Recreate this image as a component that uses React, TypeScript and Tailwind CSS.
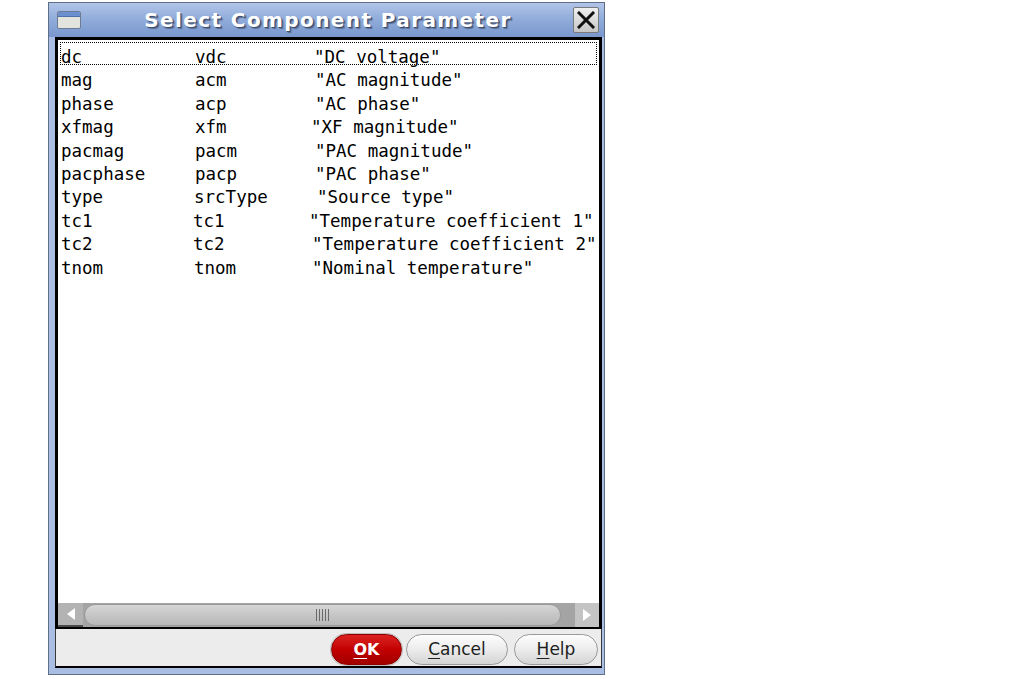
import React from 'react';

type Row = { name: string; field: string; desc: string; w1: string; w2: string };

// column offsets differ a little per row, as in the original tab-aligned list
const rows: Row[] = [
  { name: 'dc', field: 'vdc', desc: '"DC voltage"', w1: 'w-[134px]', w2: 'w-[119px]' },
  { name: 'mag', field: 'acm', desc: '"AC magnitude"', w1: 'w-[134px]', w2: 'w-[120px]' },
  { name: 'phase', field: 'acp', desc: '"AC phase"', w1: 'w-[134px]', w2: 'w-[120px]' },
  { name: 'xfmag', field: 'xfm', desc: '"XF magnitude"', w1: 'w-[134px]', w2: 'w-[116px]' },
  { name: 'pacmag', field: 'pacm', desc: '"PAC magnitude"', w1: 'w-[134px]', w2: 'w-[120px]' },
  { name: 'pacphase', field: 'pacp', desc: '"PAC phase"', w1: 'w-[134px]', w2: 'w-[120px]' },
  { name: 'type', field: 'srcType', desc: '"Source type"', w1: 'w-[133px]', w2: 'w-[123px]' },
  { name: 'tc1', field: 'tc1', desc: '"Temperature coefficient 1"', w1: 'w-[132px]', w2: 'w-[116px]' },
  { name: 'tc2', field: 'tc2', desc: '"Temperature coefficient 2"', w1: 'w-[132px]', w2: 'w-[119px]' },
  { name: 'tnom', field: 'tnom', desc: '"Nominal temperature"', w1: 'w-[133px]', w2: 'w-[118px]' },
];

const TitleBar: React.FC = () => (
  <div className="h-[34px] flex items-center pl-[8px] pr-[5px] bg-linear-to-b from-[#b2c5e8] via-[#8fabda] to-[#7997ce]">
    <div className="w-[24px] h-[18px] border border-[#6d7c92] rounded-[2px] bg-[#e4e4de] overflow-hidden">
      <div className="h-[5px] bg-[#6b8fcf] border-b border-[#5070a8]" />
    </div>
    <div className="flex-1 text-center pl-[2px] text-white font-bold text-[20px] tracking-[1.4px] leading-none font-['DejaVu_Sans',sans-serif] [text-shadow:1px_1px_0_#3c4d6e,2px_2px_1px_#5a6d90]">
      Select Component Parameter
    </div>
    <div className="w-[26px] h-[26px] border border-[#7a7a7a] rounded-[2px] bg-linear-to-b from-[#f0f0f0] to-[#c6c6c6] flex items-center justify-center">
      <svg width="18" height="18" viewBox="0 0 18 18">
        <path d="M2 2 L16 16 M16 2 L2 16" stroke="#111" strokeWidth="3" strokeLinecap="square" />
      </svg>
    </div>
  </div>
);

const ParamRow: React.FC<{ row: Row; focused: boolean }> = ({ row, focused }) => (
  <div
    className={
      focused
        ? 'flex h-[23.4px] pt-[3px] leading-[23.4px] border border-dotted border-black whitespace-nowrap'
        : 'flex h-[23.4px] pt-[3px] leading-[23.4px] border border-transparent whitespace-nowrap'
    }
  >
    <span className={`${row.w1} shrink-0`}>{row.name}</span>
    <span className={`${row.w2} shrink-0`}>{row.field}</span>
    <span className="shrink-0">{row.desc}</span>
  </div>
);

const Scrollbar: React.FC = () => (
  <div className="h-[24px] flex bg-[#a4a4a4]">
    <div className="w-[25px] h-full bg-[#b3b3b3] border-b-2 border-[#4a4a4a] flex items-center justify-center">
      <svg width="10" height="12" viewBox="0 0 10 12">
        <polygon points="9,0 9,12 1,6" fill="#ffffff" />
      </svg>
    </div>
    <div className="flex-1 h-full pl-[1px] py-[1px]">
      <div className="w-[477px] h-full rounded-full border border-[#9a9a9a] bg-linear-to-b from-[#d6d6d6] via-[#c6c6c6] to-[#b8b8b8] flex items-center justify-center">
        <div className="flex gap-[2px] h-[12px]">
          <div className="w-[1px] h-full bg-[#6a6a6a]" />
          <div className="w-[1px] h-full bg-[#6a6a6a]" />
          <div className="w-[1px] h-full bg-[#6a6a6a]" />
          <div className="w-[1px] h-full bg-[#6a6a6a]" />
          <div className="w-[1px] h-full bg-[#6a6a6a]" />
        </div>
      </div>
    </div>
    <div className="w-[24px] h-full bg-[#c4c4c4] flex items-center justify-center">
      <svg width="10" height="12" viewBox="0 0 10 12">
        <polygon points="1,0 1,12 9,6" fill="#ffffff" />
      </svg>
    </div>
  </div>
);

export default function App() {
  return (
    <div className="w-[1013px] h-[679px] bg-white pt-[2px] pl-[48px] overflow-hidden">
      <div className="w-[557px] h-[673px] border border-[#5f6f88] bg-[#aabee3] flex flex-col">
        <TitleBar />
        <div className="flex-1 flex flex-col pl-[6px] pr-[2px] pb-[6px]">
          <div className="h-[592px] flex flex-col bg-white border-x-[3px] border-t-[3px] border-b-2 border-black overflow-hidden">
            <div className="flex-1 pt-[2px] pl-[2px] pr-[2px] overflow-hidden text-black text-[17.5px] font-['DejaVu_Sans_Mono',monospace]">
              {rows.map((row, i) => (
                <ParamRow key={row.name} row={row} focused={i === 0} />
              ))}
            </div>
            <Scrollbar />
          </div>
          <div className="h-[39px] flex justify-end items-start pt-[5px] pr-[3px] gap-[4px] bg-[#ececec] border-x border-b-2 border-x-[#3a3a3a] border-b-black font-['DejaVu_Sans',sans-serif]">
            <button className="w-[71px] h-[31px] rounded-full border border-[#8c0000] bg-linear-to-b from-[#dc2020] via-[#c20000] to-[#a20000] shadow-[0_0_0_1px_#bdbdbd] text-white font-bold text-[16px] leading-none">
              <span className="underline underline-offset-[3px]">O</span>K
            </button>
            <button className="w-[102px] h-[31px] rounded-full border border-[#9a9a9a] bg-linear-to-b from-[#fdfdfd] via-[#ececec] to-[#d4d4d4] text-[#1e1e1e] text-[17px] leading-none">
              <span className="underline underline-offset-[3px]">C</span>ancel
            </button>
            <button className="ml-[2px] w-[84px] h-[31px] rounded-full border border-[#9a9a9a] bg-linear-to-b from-[#fdfdfd] via-[#ececec] to-[#d4d4d4] text-[#1e1e1e] text-[17px] leading-none">
              <span className="underline underline-offset-[3px]">H</span>elp
            </button>
          </div>
        </div>
      </div>
    </div>
  );
}
